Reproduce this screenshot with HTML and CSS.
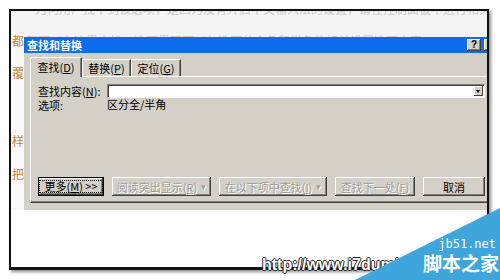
FILE: index.html
```html
<!DOCTYPE html>
<html lang="zh">
<head>
<meta charset="utf-8">
<link rel="stylesheet" href="styles.css">
</head>
<body>
<div class="frame">
  <div class="gutter">
    <span class="gc g1">都</span>
    <span class="gc g2">覆</span>
    <span class="gc g3">样</span>
    <span class="gc g4">把</span>
  </div>
  <div class="main">
    <div class="band">
      <div class="bline1">为何用户找不到该选项，是因为没有开启中文输入法的设置，请在控制面板中进行相关设置</div>
      <div class="bline2">都可以在这里查找，选项里面可以勾选区分全角和半角的相关设置选项内容</div>
    </div>
    <div class="dialog">
      <div class="titlebar">
        <span class="title">查找和替换</span>
        <span class="tbtn">?</span>
        <span class="tbtn">×</span>
      </div>
      <div class="dbody">
        <div class="tabs">
          <div class="tab sel">查找(<u>D</u>)</div>
          <div class="tab t2">替换(<u>P</u>)</div>
          <div class="tab t3">定位(<u>G</u>)</div>
        </div>
        <div class="panel">
          <div class="row">
            <span class="lbl">查找内容(<u>N</u>):</span>
            <div class="combo"><span class="arrow"></span></div>
          </div>
          <div class="row2">
            <span class="lbl">选项:</span>
            <span>区分全/半角</span>
          </div>
          <div class="btns">
            <div class="btn def"><span class="focus">更多(<u>M</u>) &gt;&gt;</span></div>
            <div class="btn dis b2">阅读突出显示(<u>R</u>) <span class="dd">▾</span></div>
            <div class="btn dis b3">在以下项中查找(<u>I</u>) <span class="dd">▾</span></div>
            <div class="btn dis b4">查找下一处(<u>F</u>)</div>
            <div class="btn b5">取消</div>
          </div>
        </div>
      </div>
    </div>
    <div class="rest"></div>
  </div>
</div>
<div class="url">http://www.i7dumin.com</div>
<div class="wm"></div>
<div class="wm-site">jb51.net</div>
<div class="wm-name">脚本之家</div>
</body>
</html>
```

FILE: styles.css
```css
html, body {
  margin: 0;
  padding: 0;
}
body {
  width: 500px;
  height: 280px;
  overflow: hidden;
  background: #fff;
  position: relative;
  font-family: "Noto Sans CJK SC", "Liberation Sans", sans-serif;
  font-size: 11px;
  color: #000;
}
.frame {
  margin: 9px 0 0 9px;
  width: 480px;
  height: 261px;
  box-sizing: border-box;
  border: 2px solid #111;
  border-bottom-width: 3px;
  box-shadow: 2px 2px 3px rgba(0,0,0,0.45);
  background: #fff;
  overflow: hidden;
  display: flex;
}
.gutter {
  width: 13px;
  flex-shrink: 0;
  display: flex;
  flex-direction: column;
  background: linear-gradient(#f4f4f4 0, #f4f4f4 26px, #f9f9f9 26px, #f9f9f9 199px, #fff 199px);
}
.gc {
  display: block;
  font-size: 12px;
  line-height: 12px;
  height: 12px;
  color: #c5853c;
  margin-left: 1px;
}
.g1 { margin-top: 24px; }
.g2 { margin-top: 20px; }
.g3 { margin-top: 56px; }
.g4 { margin-top: 21px; }
.main {
  flex: 1;
  min-width: 0;
  display: flex;
  flex-direction: column;
}
.band {
  height: 26px;
  flex-shrink: 0;
  background: #f4f4f4;
  overflow: hidden;
  white-space: nowrap;
  font-size: 12px;
  line-height: 12px;
}
.bline1 {
  margin-top: -8px;
  padding-left: 11px;
  color: #cacaca;
}
.bline2 {
  margin-top: 20px;
  padding-left: 2px;
  color: #d8cab4;
}
.dialog {
  width: 477px;
  flex-shrink: 0;
  background: #d4d0c8;
}
.titlebar {
  height: 16px;
  background: #0b6cec;
  display: flex;
  align-items: center;
  padding: 0 3px;
  gap: 3px;
}
.title {
  color: #fff;
  font-weight: bold;
  font-size: 11px;
  line-height: 16px;
  flex: 1;
}
.tbtn {
  width: 14px;
  height: 12px;
  box-sizing: border-box;
  background: #d4d0c8;
  box-shadow: inset -1px -1px #404040, inset 1px 1px #fff, inset -2px -2px #808080;
  font-family: "Liberation Sans", sans-serif;
  font-weight: bold;
  font-size: 10px;
  line-height: 12px;
  text-align: center;
  color: #000;
}
.dbody {
  padding: 4px 6px 7px;
}
.tabs {
  height: 20px;
  margin-bottom: -1px;
  display: flex;
  align-items: flex-start;
  position: relative;
  z-index: 1;
}
.tab {
  box-sizing: border-box;
  height: 17px;
  margin-top: 2px;
  border-top: 1px solid #fff;
  border-left: 1px solid #fff;
  border-right: 1px solid #404040;
  box-shadow: inset -1px 0 #808080;
  background: #d4d0c8;
  font-size: 11px;
  line-height: 16px;
  text-align: center;
}
.tab.sel {
  height: 20px;
  margin-top: 0;
  width: 52px;
  line-height: 19px;
}
.t2 { width: 49px; }
.t3 { width: 50px; }
.panel {
  height: 127px;
  box-sizing: border-box;
  border: 1px solid;
  border-color: #fff #404040 #404040 #fff;
  box-shadow: inset -1px -1px #808080;
  padding: 7px 9px 6px 7px;
  display: flex;
  flex-direction: column;
}
.row {
  height: 14px;
  display: flex;
  align-items: center;
}
.lbl {
  width: 69px;
  flex-shrink: 0;
  line-height: 14px;
}
.combo {
  flex: 1;
  height: 14px;
  box-sizing: border-box;
  background: #fff;
  border: 1px solid;
  border-color: #808080 #fff #fff #808080;
  box-shadow: inset 1px 1px #404040;
  display: flex;
  justify-content: flex-end;
  align-items: stretch;
  padding: 1px;
}
.arrow {
  width: 9px;
  background: #d4d0c8;
  box-shadow: inset -1px -1px #404040, inset 1px 1px #fff;
  position: relative;
}
.arrow::after {
  content: "";
  position: absolute;
  left: 2px;
  top: 4px;
  border-left: 2.5px solid transparent;
  border-right: 2.5px solid transparent;
  border-top: 3px solid #000;
}
.row2 {
  display: flex;
  line-height: 12px;
  margin-top: 0;
}
.btns {
  margin-top: auto;
  display: flex;
  gap: 8px;
  height: 19px;
}
.btn {
  box-sizing: border-box;
  height: 19px;
  background: #d4d0c8;
  box-shadow: inset -1px -1px #404040, inset 1px 1px #fff, inset -2px -2px #808080;
  display: flex;
  align-items: center;
  justify-content: center;
  font-size: 11px;
  white-space: nowrap;
}
.btn.def {
  width: 66px;
  border: 1px solid #000;
}
.focus {
  border: 1px dotted #000;
  padding: 0 4px;
  line-height: 11px;
}
.dis {
  color: #a09c94;
  text-shadow: 1px 1px #fff;
}
.dd {
  font-size: 9px;
  margin-left: 4px;
}
.b2 { width: 99px; }
.b3 { width: 108px; }
.b4 { width: 80px; }
.b5 { width: 62px; }
.rest {
  flex: 1;
  background: #fff;
}
.url {
  position: absolute;
  left: 262px;
  top: 256px;
  font-family: "Liberation Sans", sans-serif;
  font-weight: bold;
  font-size: 16px;
  line-height: 18px;
  color: #fff;
  text-shadow: -1px 0 #222, 1px 0 #222, 0 -1px #222, 0 1px #222;
  white-space: nowrap;
}
.wm {
  position: absolute;
  right: 0;
  bottom: 0;
  width: 145px;
  height: 72px;
  background: #3ea5dd;
  clip-path: polygon(0 100%, 100% 0, 100% 100%);
}
.wm-site {
  position: absolute;
  right: 4px;
  top: 237px;
  font-family: "DejaVu Sans Mono", monospace;
  font-size: 12px;
  line-height: 14px;
  color: #fff;
}
.wm-name {
  position: absolute;
  right: 1px;
  top: 252px;
  font-weight: bold;
  font-size: 19px;
  line-height: 22px;
  color: #fff;
}
```
